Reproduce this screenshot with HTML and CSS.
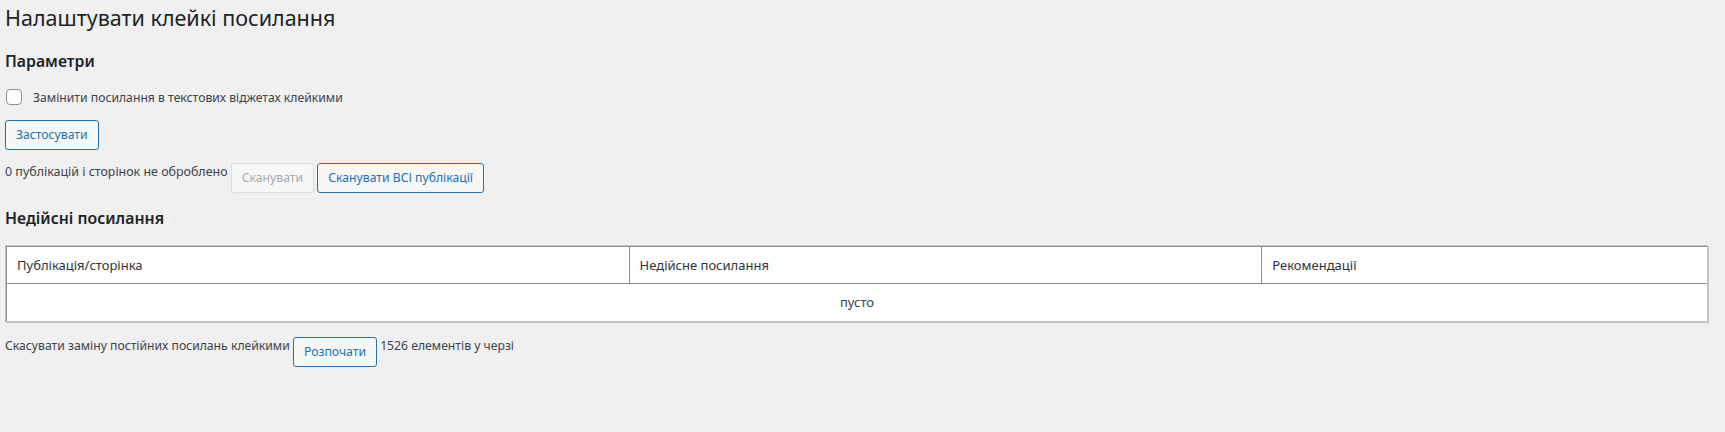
FILE: index.html
```html
<!DOCTYPE html>
<html lang="uk">

<head>
    <meta charset="UTF-8">
    <meta name="viewport" content="width=device-width, initial-scale=1.0">
    <title>Налаштувати клейкі посилання</title>
    <link rel="stylesheet" href="styles.css">
</head>

<body>
    <div class="wrap">
        <h1 class="page-title">Налаштувати клейкі посилання</h1>

        <h2 class="section-title">Параметри</h2>
        <form id="formOpciones">
            <label class="option">
                <input type="checkbox" id="widgets">
                Замінити посилання в текстових віджетах клейкими
            </label>
            <p class="apply-row">
                <button type="submit" class="button">Застосувати</button>
            </p>
        </form>

        <p class="scan-row">0 публікацій і сторінок не оброблено <button type="button" class="button" disabled>Сканувати</button> <button type="button" class="button">Сканувати ВСІ публікації</button></p>

        <h2 class="section-title broken-title">Недійсні посилання</h2>

        <table class="links-table">
            <thead>
                <tr>
                    <th class="col-post">Публікація/сторінка</th>
                    <th class="col-link">Недійсне посилання</th>
                    <th class="col-hint">Рекомендації</th>
                </tr>
            </thead>
            <tbody id="tablaEnlaces">
                <tr>
                    <td colspan="3" class="empty">пусто</td>
                </tr>
            </tbody>
        </table>

        <p class="queue-row">Скасувати заміну постійних посилань клейкими <button type="button" class="button">Розпочати</button> 1526 елементів у черзі</p>
    </div>
</body>

</html>
```

FILE: styles.css
```css
body {
    margin: 0;
    background-color: #f0f0f1;
    color: #3c434a;
    font-family: "Noto Sans", "Open Sans", sans-serif;
    font-size: 12.2px;
    line-height: 18.2px;
}

.wrap {
    padding: 0 17px 0 5px;
}

.page-title {
    margin: 0;
    padding-top: 3px;
    font-size: 21.5px;
    font-weight: 400;
    line-height: 29.9px;
    color: #1d2327;
}

.section-title {
    margin: 17px 0 0;
    font-size: 15.8px;
    font-weight: 600;
    line-height: 23.8px;
    color: #1d2327;
}

.broken-title {
    margin-top: 14px;
}

form {
    margin: 0;
}

.option {
    display: flex;
    align-items: center;
    height: 16px;
    margin-top: 16px;
}

.option input {
    appearance: none;
    width: 16px;
    height: 16px;
    margin: -2px 11px 0 1px;
    border: 1px solid #8c8f94;
    border-radius: 4px;
    background-color: #fff;
}

.apply-row {
    margin: 14px 0 0;
}

.scan-row {
    margin: 13px 0 0;
    font-size: 12.45px;
}

.button {
    display: inline-block;
    vertical-align: top;
    min-height: 30px;
    margin: 0;
    padding: 0 10px;
    font-family: inherit;
    font-size: 12.2px;
    line-height: 28px;
    color: #2271b1;
    background-color: #f6f7f7;
    border: 1px solid #2271b1;
    border-radius: 3px;
    cursor: pointer;
}

.button:disabled {
    color: #a7aaad;
    border-color: #dcdcde;
    cursor: default;
}

.links-table {
    width: 100%;
    margin-top: 14px;
    border-collapse: separate;
    border-spacing: 0;
    background-color: #fff;
    border: 1px solid #c3c4c7;
    box-shadow: 1px 1px 0 #c3c4c7;
}

.links-table th {
    padding: 10px;
    font-size: 13px;
    font-weight: 400;
    line-height: 16px;
    text-align: left;
    color: #2c3338;
    border-top: 1px solid #8c8f94;
    border-bottom: 1px solid #8c8f94;
    border-left: 1px solid #8c8f94;
}

.col-post {
    width: 36.6%;
}

.col-link {
    width: 37.2%;
}

.links-table td {
    padding: 10px;
    font-size: 13px;
    line-height: 17px;
    border-left: 1px solid #8c8f94;
}

.empty {
    text-align: center;
}

.queue-row {
    margin: 15px 0 0;
}
```
